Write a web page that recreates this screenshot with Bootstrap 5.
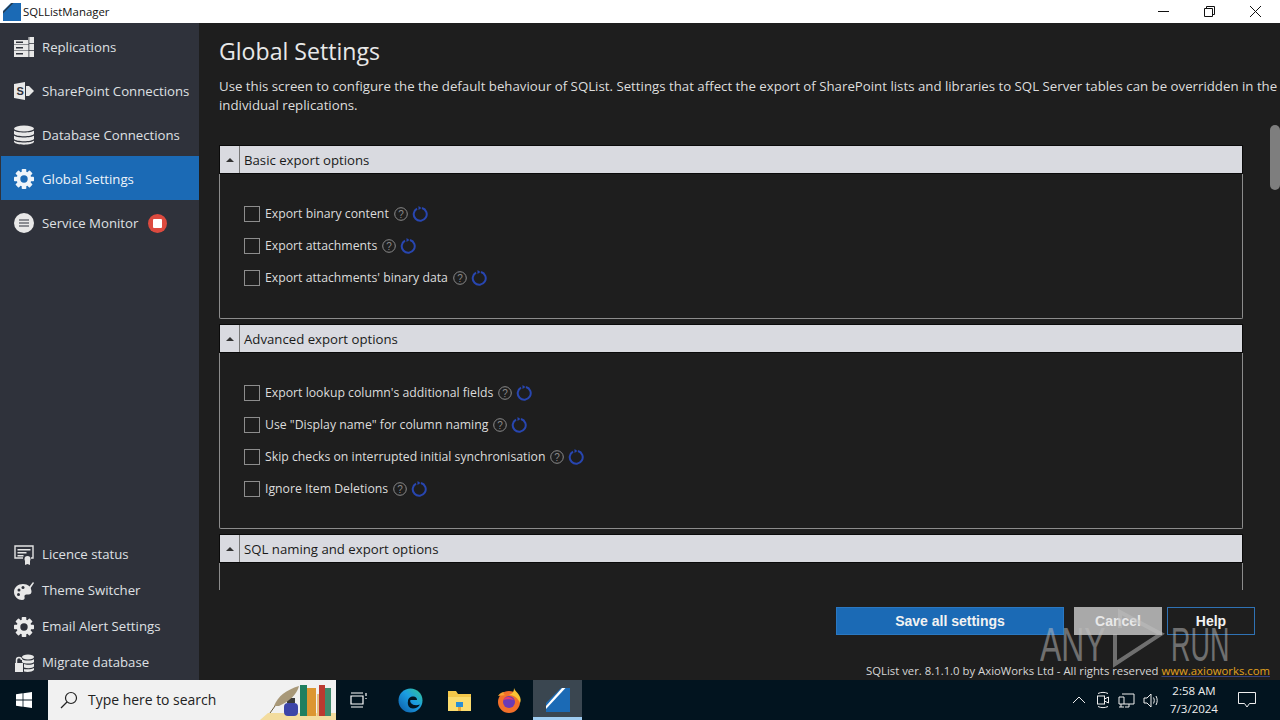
<!DOCTYPE html>
<html lang="en">
<head>
<meta charset="utf-8">
<title>SQLListManager</title>
<link href="https://cdn.jsdelivr.net/npm/bootstrap@5.3.0/dist/css/bootstrap.min.css" rel="stylesheet">
<style>
html,body{height:100%;overflow:hidden}
body{font-family:"Open Sans","Noto Sans",sans-serif;font-size:13px;background:#1e1e1e;color:#e3e3e3;width:1280px;height:720px;position:relative}
.titlebar{height:23px;background:#fff;color:#111;font-size:11.4px;flex:none}
.app-logo{width:18px;height:18px;margin-left:3px;margin-right:2px}
.win-btns svg{display:block}
.win-btns{margin-right:19px;gap:35px}
.mainarea{height:657px;flex:none;min-height:0}
.sidebar{width:199px;flex:none;background:#2f323b;padding-top:1px}
.side-item{height:44px;padding-left:14px;padding-top:4px;color:#dfe0e3;font-size:13.2px;gap:8px;white-space:nowrap}
.side-item.is-on{background:#1b6ab5;color:#eef4fa;margin-left:1px;padding-left:13px}
.side-low{height:36px;padding-top:2px}
.side-ico{width:20px;height:20px;flex:none;margin-top:-2px}
.side-low .side-ico{margin-top:0}
.stopdot{width:19px;height:19px;border-radius:50%;background:#dc4a3f;margin-left:2px;margin-top:-2px;flex:none}
.stopdot i{display:block;width:9px;height:9px;background:#fff;border-radius:1px}
.workarea{min-width:0;padding-left:20px;position:relative}
.page-h{font-size:23.1px;line-height:32px;margin:12px 0 0;color:#e8e8e8;font-weight:400}
.intro{font-size:13.26px;line-height:19px;margin:10px 0 0;width:1065px;color:#ddd}
.scroller{height:445px;margin-top:30px;overflow:hidden;width:1024px;flex:none}
.grp{margin-bottom:5px}
.grp-head{height:29px;background:#d9dae0;color:#1a1a1a;font-size:13.2px;border:1px solid #0a0a0a}
.grp-tog{width:20px;height:100%;border-right:1px solid #777;flex:none}
.grp-tog i{display:block;width:0;height:0;border-left:4px solid transparent;border-right:4px solid transparent;border-bottom:4px solid #333}
.grp-title{padding-left:4px;padding-top:2px}
.grp-body{border:1px solid #8c8c8c;border-top:0;padding:24px;border-radius:0 0 2px 2px}
.grp-body.trim{padding-bottom:23px}
.grp-body.tall{min-height:146px}
.opt{height:32px;gap:5px;color:#dcdcdc;font-size:12.25px;white-space:nowrap}
.opt-label{padding-top:1px}
.box{width:16px;height:16px;border:1px solid #8d8d8d;flex:none}
.qmark{width:14px;height:14px;flex:none}
.spin{width:16px;height:16px;flex:none;margin-left:-1px}
.scrollthumb{position:absolute;right:0;top:102px;width:10px;height:65px;background:#7e7e7e;border-radius:5px}
.actions{position:absolute;left:637px;top:584px;gap:10px}
.btn-save,.btn-cancel,.btn-help{height:28px;font:700 14px/26px "Liberation Sans",sans-serif;padding:0;border-radius:0}
.btn-save{width:228px;background:#1b6ab5;border:1px solid #2a78c2;color:#f2f2f2}
.btn-cancel{width:88px;background:#a9a9a9;border:1px solid #a9a9a9;color:#e8e8e8}
.btn-help{width:88px;background:transparent;border:1px solid #2f72b4;color:#f2f2f2;margin-left:-5px}
.footline{position:absolute;right:10px;top:639px;font-size:11.33px;line-height:18px;color:#d6d6d6;white-space:nowrap}
.footline a{color:#e2a11f;text-decoration:underline;text-decoration-color:#33407e}
.taskbar{height:40px;background:#02141f;flex:none;color:#eee}
.startbtn{width:48px;flex:none}
.searchbox{width:288px;background:#f1f1f1;color:#222;font-size:13.95px;flex:none;padding-left:12px;gap:10px;overflow:hidden;position:relative}
.tb-task{width:45px;flex:none}
.tb-app{width:49px;flex:none}
.tb-edge{margin-left:5px}
.tb-app.active-app{background:#3a4650;border-bottom:3px solid #9fcdf2;padding-top:3px}
.tray{margin-left:auto;padding-right:15px}
.tray-caret{margin-right:6px}
.clock{width:64px;text-align:center;font-size:11.5px;line-height:18px;color:#eee;margin-left:-2px}
.notif{width:36px;margin-left:3px}
.wm{position:absolute;left:1030px;top:600px;width:210px;height:75px;pointer-events:none;opacity:.5;color:#c0c0c0}
.wm b{position:absolute;top:16px;font:400 49px/56px "Liberation Sans",sans-serif;transform-origin:left top}
.wm-a{left:10px;transform:scaleX(.65)}
.wm-b{left:141px;transform:scaleX(.55)}
.wm svg{position:absolute;left:0;top:0}
</style>
</head>
<body class="d-flex flex-column">
<svg width="0" height="0" class="position-absolute">
  <defs>
    <g id="gearteeth">
      <circle cx="10" cy="10" r="7.4"/>
      <rect x="7.700" y="0" width="4.600" height="20" rx=".8"/>
      <rect x="7.700" y="0" width="4.600" height="20" rx=".8" transform="rotate(45 10 10)"/>
      <rect x="7.700" y="0" width="4.600" height="20" rx=".8" transform="rotate(90 10 10)"/>
      <rect x="7.700" y="0" width="4.600" height="20" rx=".8" transform="rotate(135 10 10)"/>
    </g>
    <linearGradient id="edgeg" x1="0" y1="1" x2="1" y2="0"><stop offset="0" stop-color="#0c59a4"/><stop offset=".55" stop-color="#1b9de2"/><stop offset="1" stop-color="#35c78f"/></linearGradient>
    <g id="qm"><circle cx="7" cy="7" r="6.300" fill="none" stroke="#8a8a8a"/><text x="7" y="10.500" text-anchor="middle" font-size="10" font-family="Liberation Sans" fill="#8a8a8a">?</text></g>
    <g id="sp"><path d="M5 2.600A6.500 6.500 0 1 0 10 2" fill="none" stroke="#2846b0" stroke-width="2"/><path d="M6.500 0v4l3-2z" fill="#2846b0"/></g>
  </defs>
</svg>
<div class="titlebar d-flex align-items-center">
  <svg class="app-logo" viewBox="0 0 18 18"><rect width="18" height="18" fill="#1b6ab5"/><path d="M0 0h8L0 8z" fill="#fff"/><path d="M0 8.500L8.500 0h2L0 10.500z" fill="#24384c"/></svg>
  <span>SQLListManager</span>
  <div class="win-btns d-flex align-items-center ms-auto">
    <svg width="11" height="11" viewBox="0 0 11 11"><path d="M0 5.500h11" stroke="#111"/></svg>
    <svg width="11" height="11" viewBox="0 0 11 11" fill="none" stroke="#111"><path d="M.5 2.500h8v8h-8zM2.500 2.500v-2h8v8h-2"/></svg>
    <svg width="11" height="11" viewBox="0 0 11 11"><path d="M0 0l11 11M11 0L0 11" stroke="#111"/></svg>
  </div>
</div>

<div class="mainarea d-flex">
  <nav class="sidebar d-flex flex-column">
    <div class="side-item d-flex align-items-center"><svg class="side-ico" viewBox="0 0 20 20"><path fill="#e8e8e8" d="M0 3h14V0h6v20H0z"/><path fill="#2f323b" d="M14.500 0h.8v20h-.8zM15 6h5v.8h-5zM15 13h5v.8h-5zM0 7.500h14.500v.6H0zM0 13.500h14.500v.6H0zM2 4.500h7v1.400H2zM2 10h7v1.400H2zM2 16h7v1.400H2z"/></svg><span>Replications</span></div>
    <div class="side-item d-flex align-items-center"><svg class="side-ico" viewBox="0 0 20 20" fill="#e8e8e8"><path d="M0 3l11-2v18L0 17z"/><path d="M12 5h3l5 5-5 5h-3z"/><text x="2.600" y="14" font-size="11" font-weight="700" font-family="Liberation Sans" fill="#2f323b">S</text></svg><span>SharePoint Connections</span></div>
    <div class="side-item d-flex align-items-center"><svg class="side-ico" viewBox="0 0 20 20" fill="#e8e8e8"><ellipse cx="10" cy="3.500" rx="10" ry="3"/><path d="M0 5.500c2 2.600 18 2.600 20 0V9c-2 3-18 3-20 0zM0 10.500c2 2.600 18 2.600 20 0V14c-2 3-18 3-20 0zM0 15.500c2 2.600 18 2.600 20 0V17c-2 3.500-18 3.500-20 0z"/></svg><span>Database Connections</span></div>
    <div class="side-item is-on d-flex align-items-center"><svg class="side-ico" viewBox="0 0 20 20"><use href="#gearteeth" fill="#eef4fa"/><circle cx="10" cy="10" r="3.700" fill="#1b6ab5"/></svg><span>Global Settings</span></div>
    <div class="side-item d-flex align-items-center"><svg class="side-ico" viewBox="0 0 20 20"><circle cx="10" cy="10" r="10" fill="#e8e8e8"/><path d="M5 6h10v2H5zM5 9h10v2H5zM5 12h10v2H5z" fill="#8b8d92"/></svg><span>Service Monitor</span><span class="stopdot d-flex align-items-center justify-content-center"><i></i></span></div>
    <div class="mt-auto">
      <div class="side-item side-low d-flex align-items-center"><svg class="side-ico" viewBox="0 0 20 20"><path d="M9 13H1V1h18v12h-2" fill="none" stroke="#e4e4e4" stroke-width="1.400"/><path d="M3.500 4h13v1.500h-13zM3.500 7h9v1.500h-9zM3.500 10h6v1.500h-6z" fill="#e4e4e4"/><circle cx="13.500" cy="14" r="3" fill="#e4e4e4"/><path d="M11 16h5v4l-2.500-1-2.500 1z" fill="#e4e4e4"/></svg><span>Licence status</span></div>
      <div class="side-item side-low d-flex align-items-center"><svg class="side-ico" viewBox="0 0 20 20"><path fill="#e8e8e8" d="M9 3C4 3 0 6.500 0 11s4 8 8 8c2.500 0 3-1.500 2.500-3-.4-1.500.5-2.500 2-2.500h2c2 0 3-1.200 3-3C17.500 6 14 3 9 3z"/><path d="M12 10L19 1l1 1-6 9z" fill="#e8e8e8"/><circle cx="5" cy="9" r="1.500" fill="#2f323b"/><circle cx="9" cy="6.500" r="1.500" fill="#2f323b"/><circle cx="4.500" cy="13.500" r="1.500" fill="#2f323b"/></svg><span>Theme Switcher</span></div>
      <div class="side-item side-low d-flex align-items-center"><svg class="side-ico" viewBox="0 0 20 20"><use href="#gearteeth" fill="#eaeaea"/><circle cx="10" cy="10" r="3.700" fill="#2f323b"/></svg><span>Email Alert Settings</span></div>
      <div class="side-item side-low d-flex align-items-center"><svg class="side-ico" viewBox="0 0 20 20" fill="#e8e8e8"><ellipse cx="14" cy="4" rx="6" ry="2.500"/><path d="M8 6c1.500 2 10.500 2 12 0v3c-1.500 2-10.500 2-12 0zM10 11c2 1.200 8.500 1 10-.5v3c-1.500 2-7 2-10 1zM10 16c2 .6 8.500.5 10-1v2c-1.500 2-7 2.500-10 1.500z"/><path d="M1 10h8v9H1z"/><path d="M2.500 10V7a2.500 2.500 0 0 1 5 0" fill="none" stroke="#e8e8e8" stroke-width="1.500"/></svg><span>Migrate database</span></div>
    </div>
  </nav>

  <main class="workarea flex-grow-1 d-flex flex-column">
    <h1 class="page-h">Global Settings</h1>
    <p class="intro">Use this screen to configure the the default behaviour of SQList. Settings that affect the export of SharePoint lists and libraries to SQL Server tables can be overridden in the individual replications.</p>
    <div class="scroller">
      <section class="grp">
        <div class="grp-head d-flex align-items-center"><span class="grp-tog d-flex align-items-center justify-content-center"><i></i></span><span class="grp-title">Basic export options</span></div>
        <div class="grp-body">
          <div class="opt d-flex align-items-center"><span class="box"></span><span class="opt-label">Export binary content</span><svg class="qmark" viewBox="0 0 14 14"><use href="#qm"/></svg><svg class="spin" viewBox="0 0 16 16"><use href="#sp"/></svg></div>
          <div class="opt d-flex align-items-center"><span class="box"></span><span class="opt-label">Export attachments</span><svg class="qmark" viewBox="0 0 14 14"><use href="#qm"/></svg><svg class="spin" viewBox="0 0 16 16"><use href="#sp"/></svg></div>
          <div class="opt d-flex align-items-center"><span class="box"></span><span class="opt-label">Export attachments' binary data</span><svg class="qmark" viewBox="0 0 14 14"><use href="#qm"/></svg><svg class="spin" viewBox="0 0 16 16"><use href="#sp"/></svg></div>
        </div>
      </section>
      <section class="grp">
        <div class="grp-head d-flex align-items-center"><span class="grp-tog d-flex align-items-center justify-content-center"><i></i></span><span class="grp-title">Advanced export options</span></div>
        <div class="grp-body trim">
          <div class="opt d-flex align-items-center"><span class="box"></span><span class="opt-label">Export lookup column's additional fields</span><svg class="qmark" viewBox="0 0 14 14"><use href="#qm"/></svg><svg class="spin" viewBox="0 0 16 16"><use href="#sp"/></svg></div>
          <div class="opt d-flex align-items-center"><span class="box"></span><span class="opt-label">Use "Display name" for column naming</span><svg class="qmark" viewBox="0 0 14 14"><use href="#qm"/></svg><svg class="spin" viewBox="0 0 16 16"><use href="#sp"/></svg></div>
          <div class="opt d-flex align-items-center"><span class="box"></span><span class="opt-label">Skip checks on interrupted initial synchronisation</span><svg class="qmark" viewBox="0 0 14 14"><use href="#qm"/></svg><svg class="spin" viewBox="0 0 16 16"><use href="#sp"/></svg></div>
          <div class="opt d-flex align-items-center"><span class="box"></span><span class="opt-label">Ignore Item Deletions</span><svg class="qmark" viewBox="0 0 14 14"><use href="#qm"/></svg><svg class="spin" viewBox="0 0 16 16"><use href="#sp"/></svg></div>
        </div>
      </section>
      <section class="grp">
        <div class="grp-head d-flex align-items-center"><span class="grp-tog d-flex align-items-center justify-content-center"><i></i></span><span class="grp-title">SQL naming and export options</span></div>
        <div class="grp-body tall"></div>
      </section>
    </div>
    <div class="scrollthumb"></div>
    <div class="actions d-flex">
      <button class="btn btn-save" type="button">Save all settings</button>
      <button class="btn btn-cancel" type="button">Cancel</button>
      <button class="btn btn-help" type="button">Help</button>
    </div>
    <div class="footline">SQList ver. 8.1.1.0 by AxioWorks Ltd - All rights reserved <a href="#">www.axioworks.com</a></div>
  </main>
</div>

<footer class="taskbar d-flex">
  <div class="startbtn d-flex align-items-center justify-content-center"><svg width="16" height="16" viewBox="0 0 16 16" fill="#fff"><path d="M0 2.300l6.600-1v6.300H0zM7.400 1.200L16 0v7.600H7.400zM0 8.400h6.600v6.300L0 13.700zM7.400 8.400H16V16l-8.600-1.200z"/></svg></div>
  <div class="searchbox d-flex align-items-center">
    <svg width="18" height="18" viewBox="0 0 18 18" fill="none" stroke="#222" stroke-width="1.200"><circle cx="11" cy="7" r="5.500"/><path d="M7 11l-6 6"/></svg>
    <span>Type here to search</span>
    <svg class="position-absolute end-0 bottom-0" width="76" height="40" viewBox="260 680 76 40"><path d="M260 720l8-7h68v7z" fill="#f3dc9e"/><path d="M300 685h7v31h-7z" fill="#1f7f5f"/><path d="M307 688h9v28h-9z" fill="#dc9630"/><path d="M317 694h2v22h-2z" fill="#e8c080"/><path d="M319 685h6v31h-6z" fill="#bb3a30"/><path d="M325 688h6v28h-6z" fill="#3f8a6c"/><rect x="284" y="703" width="14" height="13" rx="4" fill="#3d45a8"/><rect x="287" y="698" width="8" height="5" fill="#3a3a3a"/><path d="M274 706c4-10 12-16 25-20-2 8-9 15-20 20z" fill="#a89878"/><path d="M275 706l-5 7" stroke="#6a5a3a"/></svg>
  </div>
  <div class="tb-task d-flex align-items-center justify-content-center"><svg width="18" height="18" viewBox="0 0 18 18" fill="none" stroke="#fff" stroke-width="1.200"><path d="M1 5h12v8H1z"/><path d="M1 2h12M1 16h12M16 2v3M16 7v1"/></svg></div>
  <div class="tb-app tb-edge d-flex align-items-center justify-content-center"><svg width="25" height="25" viewBox="0 0 25 25"><circle cx="12.500" cy="12.500" r="12" fill="url(#edgeg)"/><path d="M10 13c0-3 3-5 6-4.500 2 .4 3 1.500 3 3.500H13c-1 0-1.500 2 1 4 2 1.500 5 1.500 8 .5-1.500 2.500-4 4-7 4-3.500 0-6-3-5-7.500z" fill="#02141f"/></svg></div>
  <div class="tb-app d-flex align-items-center justify-content-center"><svg width="23" height="21" viewBox="0 0 23 21"><path d="M0 1h8l2 3h13v17H0z" fill="#f4c84a"/><rect y="7" width="23" height="14" fill="#fbdc6e"/><rect x="8" y="12" width="7" height="5" fill="#2a8fd6"/><rect x="10" y="17" width="3" height="4" fill="#e6a63a"/></svg></div>
  <div class="tb-app d-flex align-items-center justify-content-center"><svg width="24" height="25" viewBox="0 0 24 25"><circle cx="12" cy="14" r="11" fill="#f2702a"/><path d="M17 0c1 3 3 4 5 7 2 3 2 6 1 8-2-5-6-8-11-8 3-1 5-3 5-7z" fill="#f9c233"/><path d="M1 8c2-3 4-4 6-4-1 2 0 3 2 3z" fill="#f9a233"/><circle cx="12" cy="14" r="6" fill="#6a3bb5"/><path d="M6 12c2-4 8-4 11 0-3-1-8-1-11 0z" fill="#e63b6f"/></svg></div>
  <div class="tb-app active-app d-flex align-items-center justify-content-center"><svg width="24" height="24" viewBox="0 0 24 24"><rect width="24" height="24" fill="#1b6ab5"/><path d="M0 0h15L0 15z" fill="#3a4650"/><path d="M0 18L16 0h3.500L0 21z" fill="#fff"/></svg></div>
  <div class="tray d-flex align-items-center">
    <svg class="tray-caret" width="14" height="14" viewBox="0 0 14 14" fill="none" stroke="#eee"><path d="M1 10l6-6 6 6"/></svg>
    <svg class="mx-1" width="14" height="18" viewBox="0 0 14 18" fill="none" stroke="#eee"><rect x="1.500" y="5" width="7" height="8"/><path d="M8.500 8l4-2v6l-4-2M2 2.500c3-1.500 7-1.500 10 0M2 15.500c3 1.500 7 1.500 10 0"/></svg>
    <svg class="mx-1" width="17" height="15" viewBox="0 0 17 15" fill="none" stroke="#eee"><path d="M4 1h12v10H6M1 4h5v7H1zM3 11v3M1 14h5M11 11v3h-4"/></svg>
    <svg class="mx-1" width="17" height="15" viewBox="0 0 17 15" fill="none" stroke="#eee"><path d="M1 5h3l4-4v13l-4-4H1zM10.500 4.500c1 2 1 4 0 6M13 3c1.600 3 1.600 6 0 9"/></svg>
    <div class="clock"><div>2:58 AM</div><div>7/3/2024</div></div>
    <div class="notif d-flex align-items-center justify-content-center"><svg width="18" height="16" viewBox="0 0 18 16" fill="none" stroke="#eee"><path d="M.5.500h17v11h-6l-2.500 3.500-2.500-3.500h-6z"/></svg></div>
  </div>
</footer>

<div class="wm"><b class="wm-a">ANY</b><svg width="210" height="75" viewBox="0 0 210 75" fill="none" stroke="#c0c0c0" stroke-width="4"><path d="M85 34v30l46-30-41-22v16"/></svg><b class="wm-b">RUN</b></div>
</body>
</html>
